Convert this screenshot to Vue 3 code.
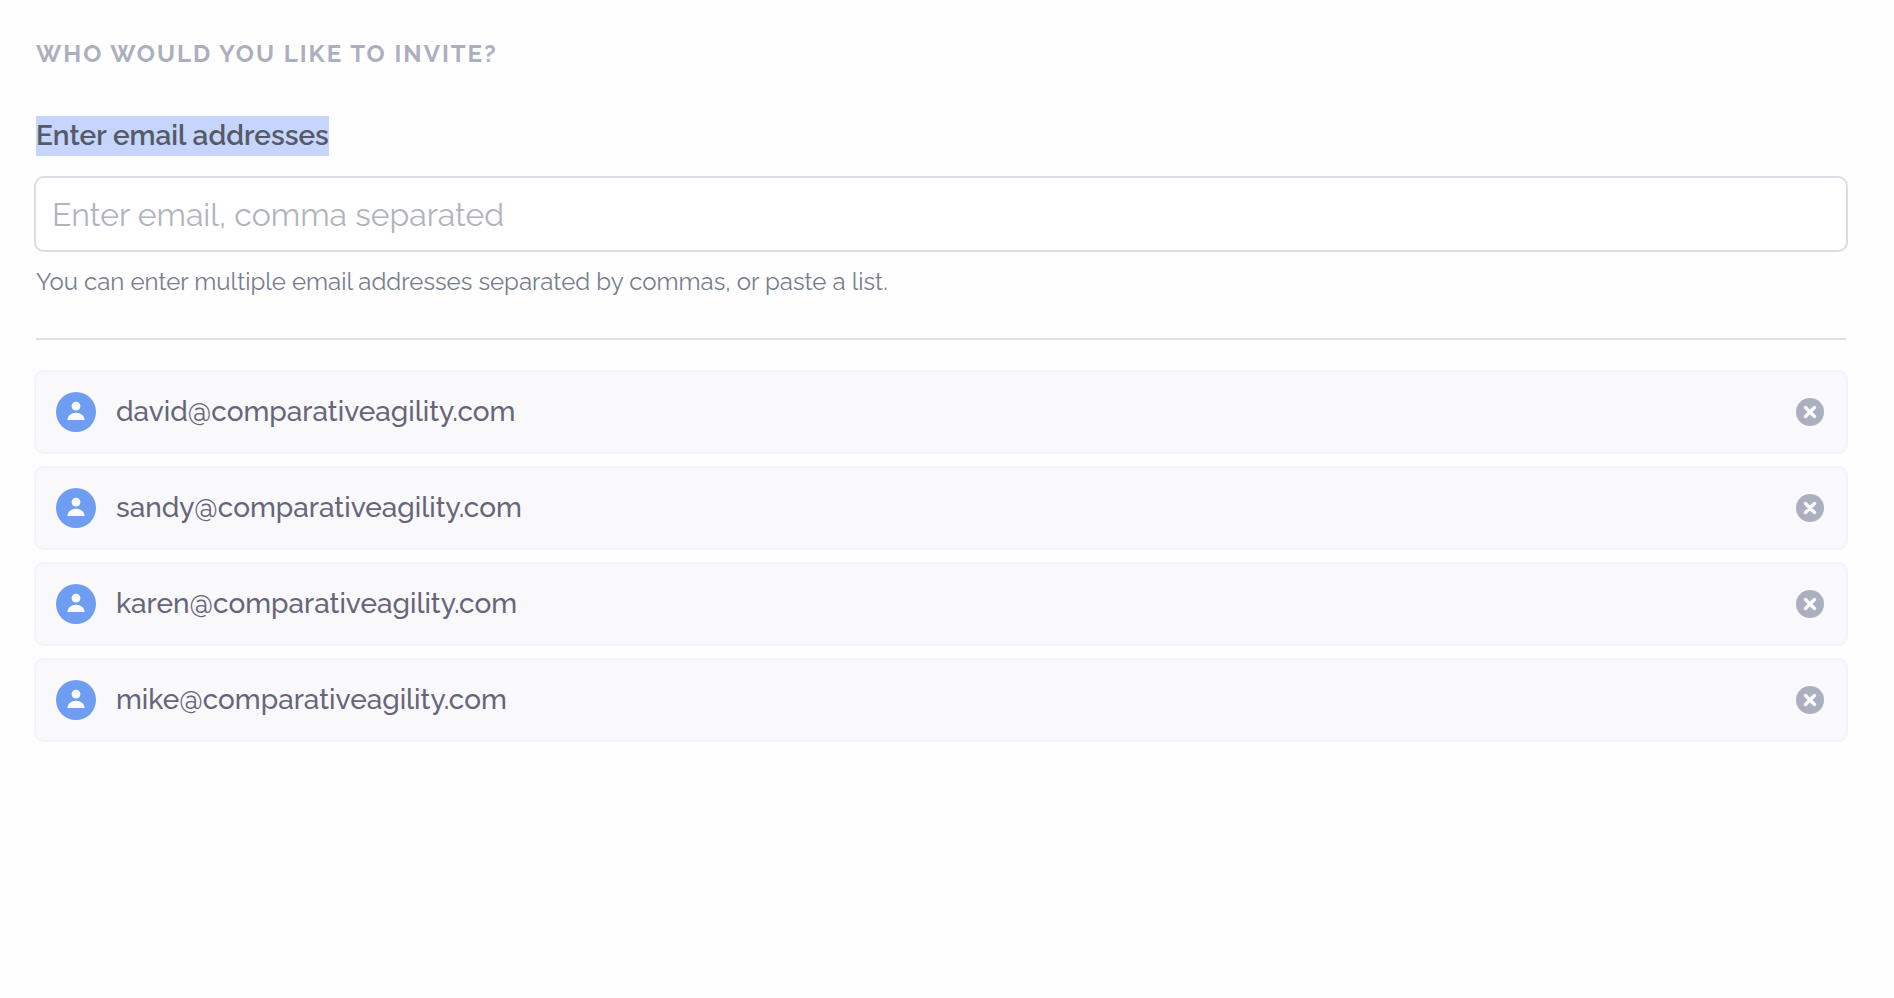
<template>
  <form class="invite" @submit.prevent="addEmails">
    <h2 class="invite_title">Who would you like to invite?</h2>

    <div class="field">
      <label class="field_label" for="emails">Enter email addresses</label>
      <input
        id="emails"
        v-model="emailText"
        class="field_input"
        type="text"
        placeholder="Enter email, comma separated"
        aria-describedby="emails-hint"
      />
      <p id="emails-hint" class="field_hint">
        You can enter multiple email addresses separated by commas, or paste a list.
      </p>
    </div>

    <hr class="divider" />

    <ul class="list">
      <li v-for="email in emails" :key="email" class="item">
        <svg class="avatar" viewBox="0 0 40 40" aria-hidden="true">
          <circle cx="20" cy="20" r="20" fill="#6e9df1" />
          <circle cx="20" cy="14.2" r="4.4" fill="#fafafc" />
          <path d="M11.4 28c.3-4.2 3.800-7.200 8.600-7.200s8.300 3 8.600 7.200z" fill="#fafafc" />
        </svg>
        <span class="item_email">{{ email }}</span>
        <button class="remove" type="button" :aria-label="'Remove ' + email" @click="removeEmail(email)">
          <svg viewBox="0 0 28 28" aria-hidden="true">
            <circle cx="14" cy="14" r="14" fill="#acafbf" />
            <path d="M9.500 9.500l9 9M18.500 9.500l-9 9" stroke="#fafafc" stroke-width="3.400" stroke-linecap="round" />
          </svg>
        </button>
      </li>
    </ul>
  </form>
</template>

<script setup>
import { ref } from 'vue'

const emailText = ref('')
const emails = ref([
  'david@comparativeagility.com',
  'sandy@comparativeagility.com',
  'karen@comparativeagility.com',
  'mike@comparativeagility.com',
])

const addEmails = () => {
  const added = emailText.value
    .split(/[\s,]+/)
    .filter((email) => email && !emails.value.includes(email))

  emails.value.push(...new Set(added))
  emailText.value = ''
}

const removeEmail = (email) => {
  emails.value = emails.value.filter((item) => item !== email)
}
</script>

<style>
body {
  margin: 0;
  background-color: #fefefe;
}
</style>

<style scoped>
.invite {
  padding: 38px 46px 38px 34px;
  font-family: Raleway, Lato, 'Open Sans', sans-serif;
}
.invite_title {
  margin: 0 2px 46px;
  font-size: 24px;
  line-height: 32px;
  font-weight: 700;
  letter-spacing: 2px;
  text-transform: uppercase;
  color: #acafbf;
}
.field {
  display: flex;
  flex-direction: column;
  align-items: flex-start;
}
.field_label {
  margin: 0 2px 20px;
  font-size: 28px;
  line-height: 40px;
  font-weight: 600;
  color: #555a66;
  background-color: #c6d5fd;
}
.field_input {
  box-sizing: border-box;
  width: 100%;
  height: 76px;
  padding: 0 16px;
  border: 2px solid #dcdce2;
  border-radius: 10px;
  background-color: #fff;
  font-family: inherit;
  font-size: 32px;
  font-weight: 400;
  color: #676579;
}
.field_input::placeholder {
  color: #b1b4be;
  opacity: 1;
}
.field_hint {
  margin: 14px 2px 0;
  font-size: 24px;
  line-height: 32px;
  color: #777d8d;
}
.divider {
  height: 2px;
  margin: 40px 2px 30px;
  border: 0;
  background-color: #dfdfe6;
}
.list {
  display: flex;
  flex-direction: column;
  gap: 12px;
  margin: 0;
  padding: 0;
  list-style: none;
}
.item {
  display: flex;
  align-items: center;
  box-sizing: border-box;
  min-height: 84px;
  padding: 20px 22px 20px 20px;
  border: 2px solid #f0f4fe;
  border-radius: 10px;
  background-color: #f9f9fc;
}
.avatar {
  flex: none;
  width: 40px;
  height: 40px;
}
.item_email {
  flex: 1;
  margin-left: 20px;
  font-size: 28px;
  line-height: 40px;
  font-weight: 500;
  color: #676579;
}
.remove {
  flex: none;
  width: 28px;
  height: 28px;
  padding: 0;
  border: 0;
  border-radius: 50%;
  background: none;
  cursor: pointer;
}
.remove svg {
  display: block;
}
</style>
